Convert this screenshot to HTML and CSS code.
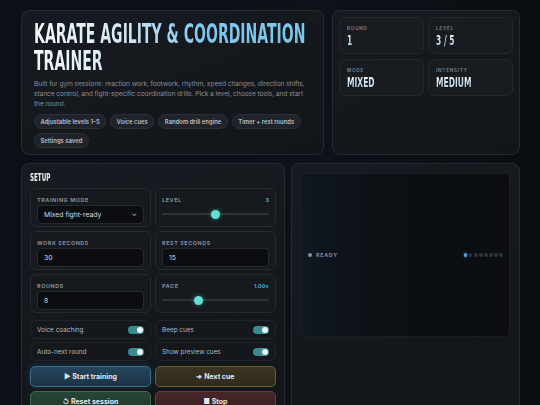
FILE: index.html
```html
<!DOCTYPE html>
<html lang="en">
  <head>
    <meta charset="UTF-8" />
    <title>Karate Agility &amp; Coordination Trainer</title>
    <link rel="stylesheet" href="styles.css">
  </head>
  <body>
    <div class="page">
      <div class="top">
        <header class="card hero">
          <h1 class="title">Karate Agility &amp; Coordination Trainer</h1>
          <p class="lead">
            Built for gym sessions: reaction work, footwork, rhythm, speed changes, direction shifts,
            stance control, and fight-specific coordination drills. Pick a level, choose tools, and start
            the round.
          </p>
          <div class="chips">
            <span class="chip">Adjustable levels 1–5</span>
            <span class="chip">Voice cues</span>
            <span class="chip">Random drill engine</span>
            <span class="chip">Timer + rest rounds</span>
            <span class="chip">Settings saved</span>
          </div>
        </header>

        <aside class="card stats">
          <div class="stat">
            <div class="stat-label">Round</div>
            <div class="stat-value">1</div>
          </div>
          <div class="stat">
            <div class="stat-label">Level</div>
            <div class="stat-value">3 / 5</div>
          </div>
          <div class="stat">
            <div class="stat-label">Mode</div>
            <div class="stat-value">Mixed</div>
          </div>
          <div class="stat">
            <div class="stat-label">Intensity</div>
            <div class="stat-value">Medium</div>
          </div>
        </aside>
      </div>

      <div class="bottom">
        <section class="card setup">
          <h2 class="section-title">Setup</h2>
          <div class="fields">
            <div class="field">
              <div class="field-head"><span>Training mode</span></div>
              <div class="select">Mixed fight-ready <span class="caret">&#8964;</span></div>
            </div>
            <div class="field">
              <div class="field-head"><span>Level</span><span class="field-val">3</span></div>
              <div class="slider"><span class="thumb" style="left: 50%"></span></div>
            </div>
            <div class="field">
              <div class="field-head"><span>Work seconds</span></div>
              <div class="input">30</div>
            </div>
            <div class="field">
              <div class="field-head"><span>Rest seconds</span></div>
              <div class="input">15</div>
            </div>
            <div class="field">
              <div class="field-head"><span>Rounds</span></div>
              <div class="input">8</div>
            </div>
            <div class="field">
              <div class="field-head"><span>Pace</span><span class="field-val">1.00×</span></div>
              <div class="slider"><span class="thumb" style="left: 34%"></span></div>
            </div>

            <div class="toggle-row first">Voice coaching <span class="toggle"></span></div>
            <div class="toggle-row first">Beep cues <span class="toggle"></span></div>
            <div class="toggle-row">Auto-next round <span class="toggle"></span></div>
            <div class="toggle-row">Show preview cues <span class="toggle"></span></div>

            <button class="btn btn-start">&#9654; Start training</button>
            <button class="btn btn-next">&#10140; Next cue</button>
            <button class="btn btn-reset">&#8634; Reset session</button>
            <button class="btn btn-stop">&#9632; Stop</button>
          </div>
        </section>

        <section class="card stage">
          <div class="screen">
            <div class="status"><span class="status-dot"></span>Ready</div>
            <div class="dots">
              <span class="dot on"></span><span class="dot"></span><span class="dot"></span><span class="dot"></span>
              <span class="dot"></span><span class="dot"></span><span class="dot"></span><span class="dot"></span>
            </div>
          </div>
        </section>
      </div>
    </div>
  </body>
</html>
```

FILE: styles.css
```css
* {
  box-sizing: border-box;
}

body {
  margin: 0;
  font-family: Inter, "Noto Sans", sans-serif;
  color: #c9ced6;
  background: linear-gradient(90deg, #0c1016 0%, #0e1218 60%, #0a0d12 100%);
  min-height: 405px;
  overflow: hidden;
}

.page {
  width: 499px;
  margin-left: 21px;
  padding-top: 10px;
}

.card {
  background: linear-gradient(160deg, #171b21 0%, #121519 100%);
  border: 1px solid #262b32;
  border-radius: 8px;
}

.top {
  display: grid;
  grid-template-columns: 303px 1fr;
  gap: 8px;
}

.hero {
  height: 145px;
  padding: 10px 12px;
  overflow: hidden;
}

/* narrow display face: condensed bold squeezed horizontally */
.title {
  width: 170%;
  margin: 0;
  font-family: "DejaVu Sans", sans-serif;
  font-stretch: condensed;
  font-weight: 700;
  font-size: 26px;
  line-height: 27px;
  text-transform: uppercase;
  transform: scaleX(0.6);
  transform-origin: 0 0;
  background: linear-gradient(90deg, #f4f7fb 0%, #d6eaf7 30%, #7dc7ee 60%);
  -webkit-background-clip: text;
  background-clip: text;
  color: transparent;
}

.lead {
  margin: 4px 0 0;
  font-size: 6.7px;
  line-height: 10px;
  letter-spacing: -0.1px;
  color: #858c97;
}

.chips {
  display: flex;
  flex-wrap: wrap;
  gap: 4px;
  margin-top: 5px;
}

.chip {
  padding: 3px 5.5px;
  font-size: 5.9px;
  font-weight: 600;
  line-height: 7px;
  color: #b9bfc8;
  background: #20242a;
  border: 1px solid #2b3037;
  border-radius: 10px;
}

.stats {
  height: 145px;
  padding: 6px;
  display: grid;
  grid-template-columns: 1fr 1fr;
  grid-template-rows: 37px 37px;
  gap: 5px 4px;
}

.stat {
  background: #181b20;
  border: 1px solid #23272d;
  border-radius: 6px;
  padding: 8px 7px;
}

.stat-label {
  font-size: 4.6px;
  font-weight: 600;
  letter-spacing: 0.8px;
  text-transform: uppercase;
  color: #7d8590;
}

.stat-value {
  width: 170%;
  margin-top: 3px;
  font-family: "DejaVu Sans", sans-serif;
  font-stretch: condensed;
  font-weight: 700;
  font-size: 14px;
  line-height: 13px;
  text-transform: uppercase;
  transform: scaleX(0.6);
  transform-origin: 0 0;
  background: linear-gradient(180deg, #f2f5f8 0%, #a9cfe6 100%);
  -webkit-background-clip: text;
  background-clip: text;
  color: transparent;
}

.bottom {
  display: grid;
  grid-template-columns: 264px 1fr;
  gap: 6px;
  margin-top: 8px;
}

.setup {
  height: 260px;
  padding: 8px 8px 0;
  overflow: hidden;
}

.section-title {
  margin: 0 0 4px;
  font-family: "DejaVu Sans", sans-serif;
  font-stretch: condensed;
  font-weight: 700;
  font-size: 10px;
  line-height: 12px;
  text-transform: uppercase;
  transform: scaleX(0.62);
  transform-origin: 0 0;
  color: #eef1f4;
}

.fields {
  display: grid;
  grid-template-columns: 1fr 1fr;
  gap: 4px;
}

.field {
  height: 39px;
  padding: 8px 6px 0;
  background: #16191e;
  border: 1px solid #252a30;
  border-radius: 6px;
}

.field-head {
  display: flex;
  justify-content: space-between;
  font-size: 5.4px;
  font-weight: 700;
  letter-spacing: 0.6px;
  line-height: 6px;
  text-transform: uppercase;
  color: #858c96;
}

.field-val {
  color: #4ea6d8;
  letter-spacing: 0;
}

.select,
.input {
  display: flex;
  align-items: center;
  justify-content: space-between;
  height: 19px;
  margin-top: 2px;
  padding: 0 6px;
  font-size: 6.8px;
  color: #d8dce2;
  background: #0b0d11;
  border: 1px solid #262a30;
  border-radius: 4px;
}

.caret {
  font-size: 7px;
  line-height: 5px;
  color: #c9ced6;
  margin-top: -3px;
}

.slider {
  position: relative;
  height: 2px;
  margin: 10px 0 0;
  background: #2d323a;
  border-radius: 2px;
}

.thumb {
  position: absolute;
  top: -3.5px;
  width: 9px;
  height: 9px;
  margin-left: -4.5px;
  border-radius: 50%;
  background: #62e0d3;
  box-shadow: 0 0 5px rgba(98, 224, 211, 0.5);
}

.toggle-row {
  display: flex;
  align-items: center;
  justify-content: space-between;
  height: 19px;
  margin-top: -1px;
  padding: 0 6px;
  font-size: 6.4px;
  color: #b3b9c2;
  background: #14171b;
  border: 1px solid #22262c;
  border-radius: 6px;
}

.toggle-row.first {
  margin-top: 3px;
}

.toggle {
  position: relative;
  width: 16px;
  height: 8px;
  background: #3b8a92;
  border-radius: 6px;
}

.toggle::after {
  content: "";
  position: absolute;
  right: 1.5px;
  top: 1px;
  width: 6px;
  height: 6px;
  border-radius: 50%;
  background: #f2f5f7;
}

.btn {
  height: 21px;
  font-family: Inter, "Noto Sans", sans-serif;
  font-size: 7px;
  font-weight: 700;
  color: #e3e7ec;
  border-radius: 5px;
  border: 1px solid;
}

.btn-start,
.btn-next {
  margin-top: 1px;
}

.btn-start {
  background: linear-gradient(180deg, #24465c 0%, #1c3445 100%);
  border-color: #3b6c8a;
  box-shadow: 0 0 6px rgba(70, 140, 190, 0.25);
}

.btn-next {
  background: linear-gradient(180deg, #3b3521 0%, #2f2a1b 100%);
  border-color: #6a5d33;
}

.btn-reset {
  background: linear-gradient(180deg, #284636 0%, #1f362a 100%);
  border-color: #3e6a50;
}

.btn-stop {
  background: linear-gradient(180deg, #472629 0%, #381e21 100%);
  border-color: #6f3a40;
}

.stage {
  height: 260px;
  padding: 9px;
}

.screen {
  display: flex;
  align-items: center;
  justify-content: space-between;
  height: 164px;
  padding: 0 6px;
  background: linear-gradient(90deg, #101720 0%, #0c0f14 40%, #0b0d11 100%);
  border: 1px solid #1a1e24;
  border-radius: 4px;
}

.status {
  display: flex;
  align-items: center;
  gap: 4px;
  font-size: 5.2px;
  font-weight: 700;
  letter-spacing: 0.8px;
  text-transform: uppercase;
  color: #7f8893;
}

.status-dot {
  width: 4px;
  height: 4px;
  border-radius: 50%;
  background: #8a939e;
}

.dots {
  display: flex;
  gap: 1.3px;
}

.dot {
  width: 3.8px;
  height: 3.8px;
  border-radius: 50%;
  background: #2f353d;
}

.dot.on {
  background: #4aa8e0;
  box-shadow: 0 0 3px rgba(74, 168, 224, 0.7);
}
```
